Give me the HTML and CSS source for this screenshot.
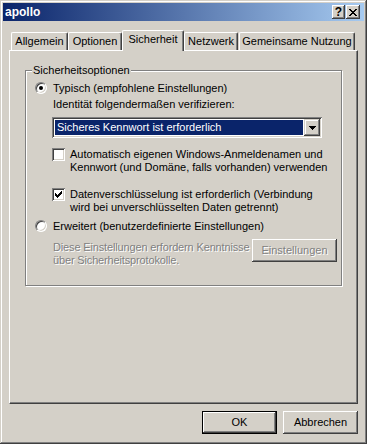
FILE: index.html
```html
<!DOCTYPE html>
<html lang="de">
<head>
  <meta charset="UTF-8" />
  <title>apollo</title>
  <link rel="stylesheet" href="styles.css">
</head>
<body>
  <div class="window">
    <div class="titlebar">
      <span class="title">apollo</span>
      <div class="caption-buttons">
        <div class="caption-btn help">?</div>
        <div class="caption-btn">
          <svg width="8" height="7" viewBox="0 0 8 7" shape-rendering="crispEdges">
            <path d="M0 0h2v1h-2zM6 0h2v1h-2zM1 1h2v1h-2zM5 1h2v1h-2zM2 2h4v1h-4zM3 3h2v1h-2zM2 4h4v1h-4zM1 5h2v1h-2zM5 5h2v1h-2zM0 6h2v1h-2zM6 6h2v1h-2z" fill="#000"/>
          </svg>
        </div>
      </div>
    </div>

    <div class="dialog">
      <div class="tabs">
        <div class="tab tab-general">Allgemein</div>
        <div class="tab tab-options">Optionen</div>
        <div class="tab tab-security active">Sicherheit</div>
        <div class="tab tab-network">Netzwerk</div>
        <div class="tab tab-sharing">Gemeinsame Nutzung</div>
      </div>

      <div class="panel">
        <div class="group">
          <span class="group-title">Sicherheitsoptionen</span>

          <div class="option">
            <span class="radio checked"></span>
            <span>Typisch (empfohlene Einstellungen)</span>
          </div>

          <div class="sub">
            <div class="hint">Identität folgendermaßen verifizieren:</div>
            <div class="combo">
              <span class="combo-value">Sicheres Kennwort ist erforderlich</span>
              <span class="combo-btn">
                <svg width="7" height="4" viewBox="0 0 7 4" shape-rendering="crispEdges">
                  <path d="M0 0h7v1h-7zM1 1h5v1h-5zM2 2h3v1h-3zM3 3h1v1h-1z" fill="#000"/>
                </svg>
              </span>
            </div>

            <div class="check-row first">
              <span class="checkbox"></span>
              <span>Automatisch eigenen Windows-Anmeldenamen und<br>Kennwort (und Domäne, falls vorhanden) verwenden</span>
            </div>
            <div class="check-row second">
              <span class="checkbox">
                <svg width="7" height="7" viewBox="0 0 7 7" shape-rendering="crispEdges">
                  <path d="M6 0h1v3h-1zM5 1h1v3h-1zM4 2h1v3h-1zM3 3h1v3h-1zM2 4h1v3h-1zM1 3h1v3h-1zM0 2h1v3h-1z" fill="#000"/>
                </svg>
              </span>
              <span>Datenverschlüsselung ist erforderlich (Verbindung<br>wird bei unverschlüsselten Daten getrennt)</span>
            </div>
          </div>

          <div class="option advanced-option">
            <span class="radio"></span>
            <span>Erweitert (benutzerdefinierte Einstellungen)</span>
          </div>

          <div class="advanced">
            <p class="disabled-text">Diese Einstellungen erfordern Kenntnisse<br>über Sicherheitsprotokolle.</p>
            <button class="btn btn-settings" disabled>Einstellungen</button>
          </div>
        </div>
      </div>

      <div class="footer">
        <button class="btn default">OK</button>
        <button class="btn">Abbrechen</button>
      </div>
    </div>
  </div>
</body>
</html>
```

FILE: styles.css
```css
body {
  margin: 0;
  font-family: 'Liberation Sans', Arial, sans-serif;
  font-size: 11px;
  line-height: 13px;
  color: #000;
  background: #d4d0c8;
}

.window {
  width: 367px;
  height: 444px;
  box-sizing: border-box;
  padding: 3px;
  background: #d4d0c8;
  box-shadow: inset -1px -1px #404040, inset 1px 1px #d4d0c8,
              inset -2px -2px #808080, inset 2px 2px #fff;
}

.titlebar {
  height: 18px;
  display: flex;
  align-items: center;
  justify-content: space-between;
  padding-left: 2px;
  background: linear-gradient(to right, #0a246a, #a6caf0);
}

.title {
  color: #fff;
  font-weight: bold;
  font-size: 12px;
}

.caption-buttons {
  display: flex;
  gap: 1px;
  margin-right: 4px;
}

.caption-btn {
  width: 14px;
  height: 14px;
  box-sizing: border-box;
  display: flex;
  align-items: center;
  justify-content: center;
  background: #d4d0c8;
  box-shadow: inset -1px -1px #404040, inset 1px 1px #fff,
              inset -2px -2px #808080;
  font-weight: bold;
  font-size: 12px;
}

.caption-btn.help {
  width: 13px;
}

.dialog {
  padding: 0 6px;
}

/* tab strip */
.tabs {
  display: flex;
  align-items: flex-end;
  height: 20px;
  margin-top: 9px;
  padding-left: 2px;
}

.tab {
  height: 18px;
  box-sizing: border-box;
  display: flex;
  align-items: center;
  justify-content: center;
  padding-bottom: 1px;
  border-top: 1px solid #fff;
  border-left: 1px solid #fff;
  border-right: 1px solid #404040;
  border-radius: 2px 2px 0 0;
  box-shadow: inset -1px 0 #808080;
}

.tab-general { width: 57px; }
.tab-options { width: 54px; }
.tab-security { width: 62px; }
.tab-network { width: 54px; margin-right: 1px; }
.tab-sharing { width: 116px; }

.tab.active {
  height: 21px;
  margin-bottom: -1px;
  padding-bottom: 4px;
  position: relative;
  z-index: 1;
  background: #d4d0c8;
}

.panel {
  height: 354px;
  box-sizing: border-box;
  padding: 20px 0 0 16px;
  border-top: 1px solid #fff;
  border-left: 1px solid #fff;
  border-right: 1px solid #404040;
  border-bottom: 1px solid #404040;
  box-shadow: inset -1px -1px #808080;
}

/* group box */
.group {
  position: relative;
  width: 317px;
  height: 216px;
  box-sizing: border-box;
  padding: 11px 0 0 9px;
  margin-left: -1px;
  margin-top: -1px;
  border: 1px solid #808080;
  box-shadow: inset 1px 1px #fff, 1px 1px #fff;
}

.group-title {
  position: absolute;
  top: -7px;
  left: 6px;
  padding: 0 1px;
  background: #d4d0c8;
}

.option {
  display: flex;
  align-items: flex-start;
  gap: 6px;
}

.radio {
  width: 12px;
  height: 12px;
  box-sizing: border-box;
  position: relative;
  border-radius: 50%;
  border: 1px solid;
  border-color: #808080 #fff #fff #808080;
  background: #fff;
  box-shadow: inset 1px 1px #404040, inset -1px -1px #d4d0c8;
}

.radio.checked::after {
  content: "";
  position: absolute;
  left: 3px;
  top: 3px;
  width: 4px;
  height: 4px;
  border-radius: 50%;
  background: #000;
}

.sub {
  margin-left: 17px;
}

.hint {
  margin-top: 3px;
  padding-left: 1px;
}

.combo {
  display: flex;
  width: 270px;
  height: 21px;
  box-sizing: border-box;
  margin-top: 6px;
  padding: 2px;
  background: #fff;
  box-shadow: inset 1px 1px #808080, inset -1px -1px #fff,
              inset 2px 2px #404040, inset -2px -2px #d4d0c8;
}

.combo-value {
  flex: 1;
  margin: 1px;
  padding-left: 2px;
  background: #0a246a;
  color: #fff;
  line-height: 15px;
}

.combo-btn {
  width: 16px;
  height: 17px;
  box-sizing: border-box;
  display: flex;
  align-items: center;
  justify-content: center;
  background: #d4d0c8;
  box-shadow: inset -1px -1px #404040, inset 1px 1px #d4d0c8,
              inset -2px -2px #808080, inset 2px 2px #fff;
}

.check-row {
  display: flex;
  align-items: flex-start;
  gap: 5px;
}

.check-row.first { margin-top: 10px; }
.check-row.second { margin-top: 14px; }

.checkbox {
  width: 13px;
  height: 13px;
  flex: none;
  box-sizing: border-box;
  display: flex;
  align-items: center;
  justify-content: center;
  background: #fff;
  box-shadow: inset 1px 1px #808080, inset -1px -1px #fff,
              inset 2px 2px #404040, inset -2px -2px #d4d0c8;
}

.advanced-option {
  margin-top: 6px;
}

.advanced {
  display: flex;
  align-items: flex-start;
  justify-content: space-between;
  width: 284px;
  margin-top: 6px;
  margin-left: 18px;
}

.disabled-text {
  flex: none;
  margin: 2px 0 0;
  white-space: nowrap;
  letter-spacing: -0.15px;
  color: #808080;
  text-shadow: 1px 1px #fff;
}

/* buttons */
.btn {
  flex: none;
  width: 75px;
  height: 23px;
  padding: 0;
  border: none;
  font: inherit;
  color: #000;
  background: #d4d0c8;
  box-shadow: inset -1px -1px #404040, inset 1px 1px #fff,
              inset -2px -2px #808080, inset 2px 2px #d4d0c8;
}

.btn:disabled {
  color: #808080;
  text-shadow: 1px 1px #fff;
}

.btn-settings {
  width: 85px;
}

.btn.default {
  border: 1px solid #000;
}

.footer {
  display: flex;
  justify-content: flex-end;
  gap: 6px;
  margin-top: 7px;
}
```
